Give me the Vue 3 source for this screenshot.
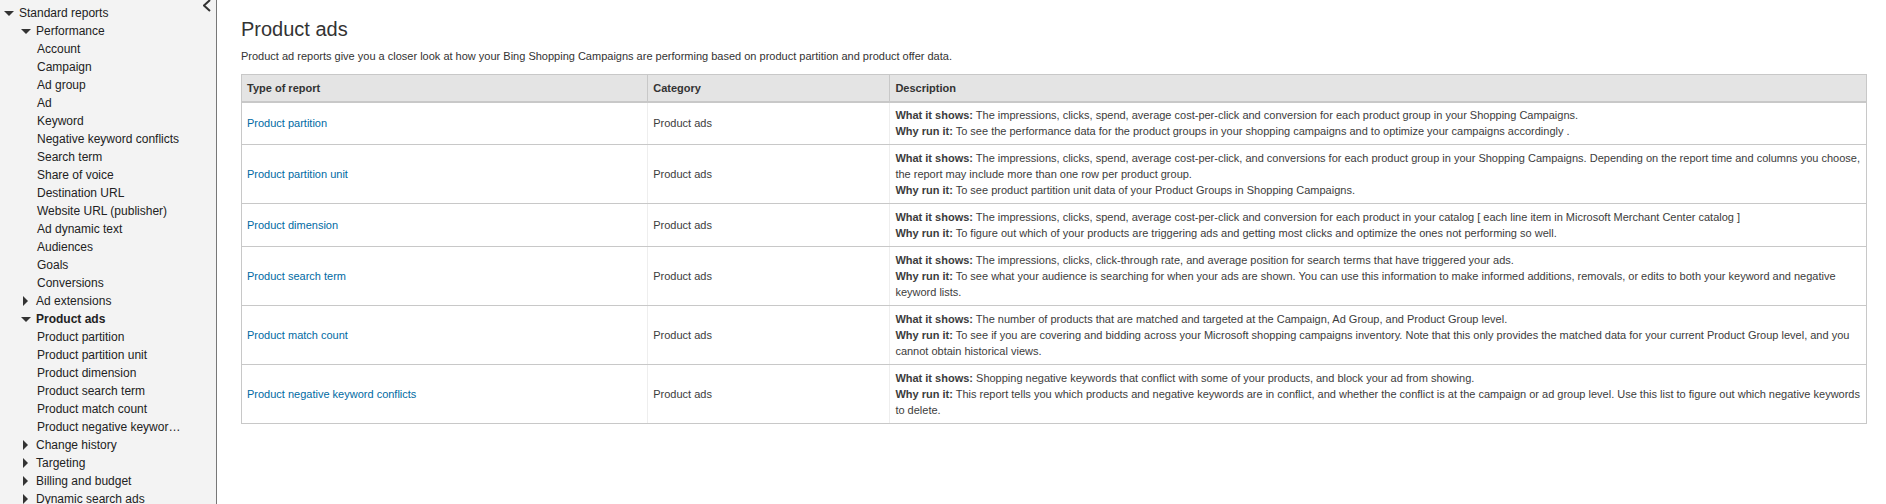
<script setup>
import { reactive } from 'vue'

const tree = reactive([
  {
    name: 'Performance',
    open: true,
    children: [
      'Account', 'Campaign', 'Ad group', 'Ad', 'Keyword', 'Negative keyword conflicts',
      'Search term', 'Share of voice', 'Destination URL', 'Website URL (publisher)',
      'Ad dynamic text', 'Audiences', 'Goals', 'Conversions',
    ],
  },
  { name: 'Ad extensions', open: false, children: [] },
  {
    name: 'Product ads',
    open: true,
    current: true,
    children: [
      'Product partition', 'Product partition unit', 'Product dimension',
      'Product search term', 'Product match count', 'Product negative keyword conflicts',
    ],
  },
  { name: 'Change history', open: false, children: [] },
  { name: 'Targeting', open: false, children: [] },
  { name: 'Billing and budget', open: false, children: [] },
  { name: 'Dynamic search ads', open: false, children: [] },
])

const root = reactive({ open: true })

const reports = [
  {
    name: 'Product partition',
    shows: 'The impressions, clicks, spend, average cost-per-click and conversion for each product group in your Shopping Campaigns.',
    why: 'To see the performance data for the product groups in your shopping campaigns and to optimize your campaigns accordingly .',
  },
  {
    name: 'Product partition unit',
    shows: 'The impressions, clicks, spend, average cost-per-click, and conversions for each product group in your Shopping Campaigns. Depending on the report time and columns you choose, the report may include more than one row per product group.',
    why: 'To see product partition unit data of your Product Groups in Shopping Campaigns.',
  },
  {
    name: 'Product dimension',
    shows: 'The impressions, clicks, spend, average cost-per-click and conversion for each product in your catalog [ each line item in Microsoft Merchant Center catalog ]',
    why: 'To figure out which of your products are triggering ads and getting most clicks and optimize the ones not performing so well.',
  },
  {
    name: 'Product search term',
    shows: 'The impressions, clicks, click-through rate, and average position for search terms that have triggered your ads.',
    why: 'To see what your audience is searching for when your ads are shown. You can use this information to make informed additions, removals, or edits to both your keyword and negative keyword lists.',
  },
  {
    name: 'Product match count',
    shows: 'The number of products that are matched and targeted at the Campaign, Ad Group, and Product Group level.',
    why: 'To see if you are covering and bidding across your Microsoft shopping campaigns inventory. Note that this only provides the matched data for your current Product Group level, and you cannot obtain historical views.',
  },
  {
    name: 'Product negative keyword conflicts',
    shows: 'Shopping negative keywords that conflict with some of your products, and block your ad from showing.',
    why: 'This report tells you which products and negative keywords are in conflict, and whether the conflict is at the campaign or ad group level. Use this list to figure out which negative keywords to delete.',
  },
]
</script>

<template>
  <div class="page">
    <aside class="sidebar">
      <nav class="tree" aria-label="Reports">
        <button class="node" type="button" :aria-expanded="root.open" @click="root.open = !root.open">
          <svg class="arrow" :class="{ closed: !root.open }" viewBox="0 0 10 10" aria-hidden="true"><path d="M0 3h10L5 8z" /></svg>
          <span>Standard reports</span>
        </button>
        <ul v-if="root.open" class="groups">
          <li v-for="group in tree" :key="group.name">
            <button
              class="node"
              :class="{ current: group.current }"
              type="button"
              :aria-expanded="group.open"
              @click="group.open = !group.open"
            >
              <svg class="arrow" viewBox="0 0 10 10" aria-hidden="true">
                <path v-if="group.open" d="M0 3h10L5 8z" />
                <path v-else d="M2 0v10l5-5z" />
              </svg>
              <span>{{ group.name }}</span>
            </button>
            <ul v-if="group.open" class="leaves">
              <li v-for="leaf in group.children" :key="leaf"><a href="#">{{ leaf }}</a></li>
            </ul>
          </li>
        </ul>
      </nav>
      <button class="collapse" type="button" aria-label="Collapse panel">
        <svg viewBox="0 0 8 12" aria-hidden="true"><path d="M7 0L1 5.5L7 11" /></svg>
      </button>
    </aside>

    <main class="content">
      <h1>Product ads</h1>
      <p>Product ad reports give you a closer look at how your Bing Shopping Campaigns are performing based on product partition and product offer data.</p>
      <table>
        <colgroup>
          <col class="type" />
          <col class="category" />
          <col />
        </colgroup>
        <thead>
          <tr>
            <th scope="col">Type of report</th>
            <th scope="col">Category</th>
            <th scope="col">Description</th>
          </tr>
        </thead>
        <tbody>
          <tr v-for="report in reports" :key="report.name">
            <td><a href="#">{{ report.name }}</a></td>
            <td>Product ads</td>
            <td>
              <div><strong>What it shows:</strong> {{ report.shows }}</div>
              <div><strong>Why run it:</strong> {{ report.why }}</div>
            </td>
          </tr>
        </tbody>
      </table>
    </main>
  </div>
</template>

<style>
body {
  margin: 0;
  background: #fff;
}
</style>

<style scoped>
.page {
  display: flex;
  height: 100vh;
  overflow: hidden;
  font-family: "Liberation Sans", Arial, sans-serif;
  font-size: 11px;
  line-height: 16px;
  color: #333;
}

.sidebar {
  display: flex;
  flex: none;
  box-sizing: border-box;
  width: 217px;
  overflow: hidden;
  background: #f3f3f3;
  border-right: 1px solid #777;
}

.tree {
  width: 184px;
  padding: 4px 0 0 4px;
  box-sizing: border-box;
  font-size: 12px;
  line-height: 18px;
  color: #222;
}

.tree ul {
  margin: 0;
  padding: 0;
  list-style: none;
}

.groups .node {
  padding-left: 17px;
}

.node {
  display: flex;
  align-items: center;
  gap: 5px;
  width: 100%;
  height: 18px;
  padding: 0;
  border: 0;
  background: none;
  font: inherit;
  color: inherit;
  text-align: left;
  white-space: nowrap;
  cursor: pointer;
}

.node.current {
  font-weight: bold;
}

.arrow {
  flex: none;
  width: 10px;
  height: 10px;
  fill: #333;
}

.arrow.closed {
  transform: rotate(-90deg);
}

.leaves a {
  display: block;
  padding-left: 33px;
  overflow: hidden;
  text-overflow: ellipsis;
  white-space: nowrap;
  color: inherit;
  text-decoration: none;
}

.collapse {
  align-self: flex-start;
  margin: 0 5px 0 auto;
  padding: 0;
  border: 0;
  background: none;
  cursor: pointer;
}

.collapse svg {
  display: block;
  width: 8px;
  height: 12px;
  fill: none;
  stroke: #333;
  stroke-width: 2;
}

.content {
  flex: 1;
  min-width: 0;
  padding: 16px 19px 0 24px;
}

h1 {
  margin: 0;
  font-size: 20px;
  font-weight: normal;
  line-height: 26px;
}

p {
  margin: 6px 0 10px;
}

table {
  width: 100%;
  table-layout: fixed;
  border-collapse: collapse;
  border: 1px solid #c8c8c8;
}

.type {
  width: 25%;
}

.category {
  width: 14.9%;
}

th,
td {
  padding: 5px 2px 5px 5px;
  text-align: left;
  vertical-align: middle;
}

th {
  background: #e4e4e4;
  border: 1px solid #c8c8c8;
  border-bottom-width: 2px;
}

td {
  color: #3c3c3c;
  border-bottom: 1px solid #c8c8c8;
}

tbody tr:first-child td {
  padding-top: 4px;
}

td + td {
  border-left: 1px solid #eee;
}

td a {
  color: #006aa3;
  text-decoration: none;
}
</style>
